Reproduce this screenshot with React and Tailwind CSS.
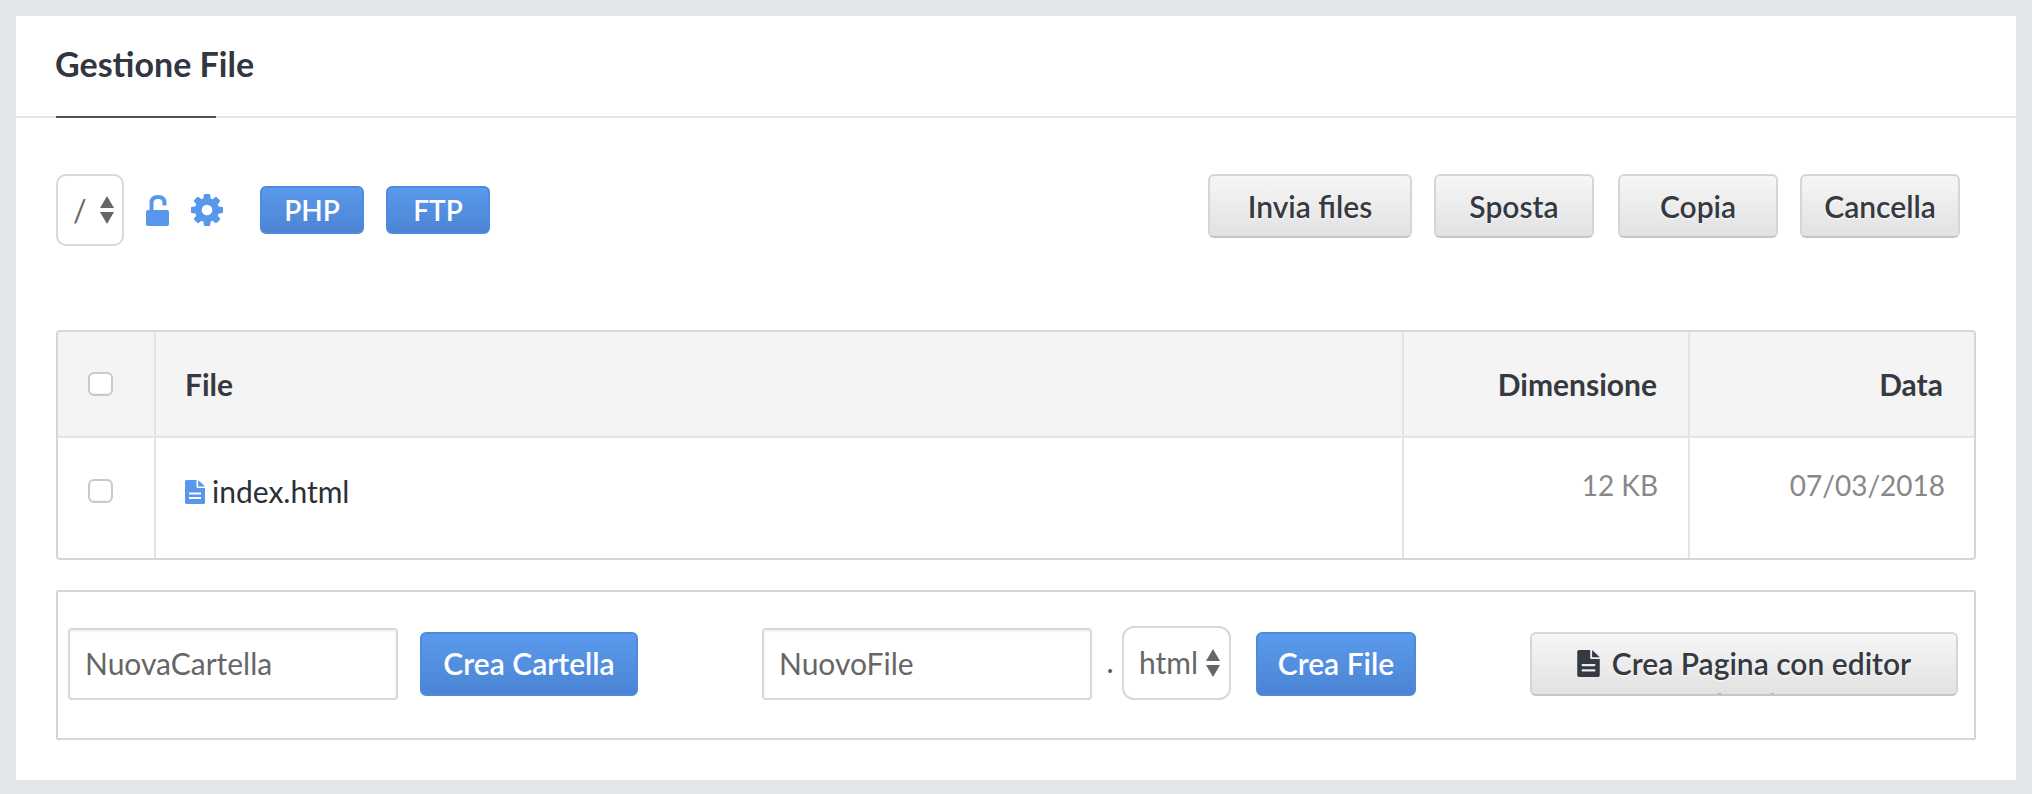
import React from "react";

const grayBtn = "h-16 rounded-md border-2 border-[#d6d6d6] border-b-[#c6c6c6] bg-gradient-to-b from-[#f6f6f6] to-[#e2e2e2] text-[#353a42] font-semibold text-[30px] [text-shadow:0_1px_2px_rgba(255,255,255,0.9)] flex items-center justify-center";
const blueBtn = "rounded-md border-2 border-[#4e8ae0] bg-gradient-to-b from-[#5a9aec] to-[#4c84d4] text-white font-semibold flex items-center justify-center";

function Updown() {
  return (
    <svg width="14" height="28" viewBox="0 0 14 28" className="shrink-0">
      <path d="M7 0 L14 12 L0 12 Z" fill="#666" />
      <path d="M0 16 L14 16 L7 28 Z" fill="#666" />
    </svg>
  );
}

function Doc({ color, className }) {
  return (
    <svg viewBox="0 0 20 24" className={className}>
      <path
        fillRule="evenodd"
        fill={color}
        d="M1.5 0 H11.5 V7 Q11.5 8 12.5 8 H20 V22.5 Q20 24 18.5 24 H1.5 Q0 24 0 22.5 V1.5 Q0 0 1.5 0 Z M4 12.5 V14.5 H16 V12.5 Z M4 17 V19 H16 V17 Z M13.2 0 L20 6.4 H13.2 Z"
      />
    </svg>
  );
}

function Gear({ className }) {
  return (
    <svg viewBox="128 128 1536 1536" className={className} fill="currentColor">
      <path
        fillRule="evenodd"
        d="M1152 896q0-106-75-181t-181-75-181 75-75 181 75 181 181 75 181-75 75-181zm512-109v222q0 12-8 23t-20 13l-185 28q-19 54-39 91 35 50 107 138 10 12 10 25t-9 23q-27 37-99 108t-94 71q-12 0-26-9l-138-108q-44 23-91 38-16 136-29 186-7 28-36 28h-222q-14 0-24.5-8.5t-11.5-21.5l-28-184q-49-16-90-37l-141 107q-10 9-25 9-14 0-25-11-126-114-165-168-7-10-7-23 0-12 8-23 15-21 51-66.5t54-70.5q-27-50-41-99l-183-27q-13-2-21-12.5t-8-23.5v-222q0-12 8-23t19-13l186-28q14-46 39-92-40-57-107-138-10-12-10-24 0-10 9-23 26-36 98.5-107.5t94.5-71.5q13 0 26 10l138 107q44-23 91-38 16-136 29-186 7-28 36-28h222q14 0 24.5 8.5t11.5 21.5l28 184q49 16 90 37l142-107q9-9 24-9 13 0 25 10 129 119 165 170 7 8 7 22 0 12-8 23-15 21-51 66.5t-54 70.5q26 50 41 98l183 28q13 2 21 12.5t8 23.5z"
      />
    </svg>
  );
}

function Check() {
  return <span className="block w-[25px] h-6 rounded-md border-2 border-[#c9c9c9] bg-white shadow-[inset_0_-1px_1px_rgba(0,0,0,0.06)]" />;
}

export default function App() {
  return (
    <div className="min-h-screen bg-[#e2e6e9] pt-4 pl-4 pr-4 font-['Lato','Open_Sans',sans-serif] text-[#353a42]">
      <div className="w-[2000px] h-[764px] bg-white">
        <div className="h-[102px] border-b-2 border-[#e4e6e8] px-10 pt-[26px] flex flex-col">
          <h1 className="text-[34px] leading-[44px] font-bold text-[#323640] h-[74px] shrink-0 -ml-px">Gestione File</h1>
          <div className="w-40 h-0.5 bg-[#4a5260] shrink-0" />
        </div>

        <div className="mt-[56px] pl-10 pr-[56px] flex items-start justify-between h-[156px]">
          <div className="flex items-center">
            <div className="w-[68px] h-[72px] rounded-[10px] border-2 border-[#d8d8d8] flex items-center pl-[15px] gap-[17px] text-[30px] text-[#666]">
              <span className="w-[10px]">/</span>
              <Updown />
            </div>
            <svg viewBox="0 0 23 31" className="w-[23px] h-[31px] ml-[22px]">
              <path d="M5.5 17 V8 C5.5 4 8 2 12 2 C16 2 18.5 4 18.5 8 V10.5" fill="none" stroke="#5897ec" strokeWidth="4" />
              <rect x="0" y="15" width="23" height="16" rx="2" fill="#5897ec" />
            </svg>
            <Gear className="w-8 h-8 ml-[22px] text-[#5897ec]" />
            <div className={blueBtn + " text-[28px] w-[104px] h-12 ml-[37px]"}>PHP</div>
            <div className={blueBtn + " text-[28px] w-[104px] h-12 ml-[22px]"}>FTP</div>
          </div>
          <div className="flex">
            <div className={grayBtn + " w-[204px]"}>Invia files</div>
            <div className={grayBtn + " w-[160px] ml-[22px]"}>Sposta</div>
            <div className={grayBtn + " w-[160px] ml-6"}>Copia</div>
            <div className={grayBtn + " w-40 ml-[22px]"}>Cancella</div>
          </div>
        </div>

        <div className="mx-10 w-[1920px] h-[230px] border-2 border-[#d6d6d6] rounded-[4px] overflow-hidden grid grid-cols-[98px_1248px_286px_284px] grid-rows-[106px_1fr] text-[30px]">
          <div className="bg-[#f4f4f4] border-r-2 border-b-2 border-[#e4e4e4] flex items-center justify-center pr-3"><Check /></div>
          <div className="bg-[#f4f4f4] border-r-2 border-b-2 border-[#e4e4e4] flex items-center pl-[29px] font-bold">File</div>
          <div className="bg-[#f4f4f4] border-r-2 border-b-2 border-[#e4e4e4] flex items-center justify-end pr-[31px] font-bold">Dimensione</div>
          <div className="bg-[#f4f4f4] border-b-2 border-[#e4e4e4] flex items-center justify-end pr-[31px] font-bold">Data</div>

          <div className="border-r-2 border-[#e4e4e4] flex justify-center pr-3 pt-[41px]"><Check /></div>
          <div className="border-r-2 border-[#e4e4e4] pl-[29px] pt-[32px] flex items-start gap-[7px] h-full">
            <Doc color="#5897ec" className="w-5 h-6 mt-[10px]" />
            <span className="text-[#2b2f36] leading-[42px]">index.html</span>
          </div>
          <div className="border-r-2 border-[#e4e4e4] text-right pr-[30px] pt-[26px] text-[28px] text-[#888] leading-[42px]">12 KB</div>
          <div className="text-right pr-[29px] pt-[26px] text-[28px] text-[#888] leading-[42px]">07/03/2018</div>
        </div>

        <div className="mt-[30px] mx-10 w-[1920px] h-[150px] border-2 border-[#d6d6d6] rounded-[2px] flex items-center pl-[10px] pb-[3px] text-[30px]">
          <div className="w-[330px] h-[72px] rounded-[4px] border-2 border-[#d8d8d8] shadow-[inset_0_2px_2px_rgba(0,0,0,0.05)] flex items-center pl-[15px] text-[#666]">NuovaCartella</div>
          <div className={blueBtn + " w-[218px] h-16 ml-[22px]"}>Crea Cartella</div>
          <div className="w-[330px] h-[72px] ml-[124px] rounded-[4px] border-2 border-[#d8d8d8] shadow-[inset_0_2px_2px_rgba(0,0,0,0.05)] flex items-center pl-[15px] text-[#666]">NuovoFile</div>
          <span className="w-[30px] text-center text-[#555] pl-[6px] pb-[4px]">.</span>
          <div className="w-[109px] h-[74px] -mt-[2px] rounded-[12px] border-2 border-[#d8d8d8] flex items-center pl-[15px] gap-[8px] text-[#666]">
            <span>html</span>
            <Updown />
          </div>
          <div className={blueBtn + " w-[160px] h-16 ml-[25px]"}>Crea File</div>
          <div className={grayBtn + " relative w-[428px] ml-[114px] gap-3"}>
            <Doc color="#353a42" className="w-[23px] h-[27px]" />
            <span>Crea Pagina con editor</span>
            <span className="absolute left-[186px] bottom-0 w-[3px] h-px bg-[#aaa]" />
            <span className="absolute left-[239px] bottom-0 w-[3px] h-px bg-[#aaa]" />
          </div>
        </div>
      </div>
    </div>
  );
}
